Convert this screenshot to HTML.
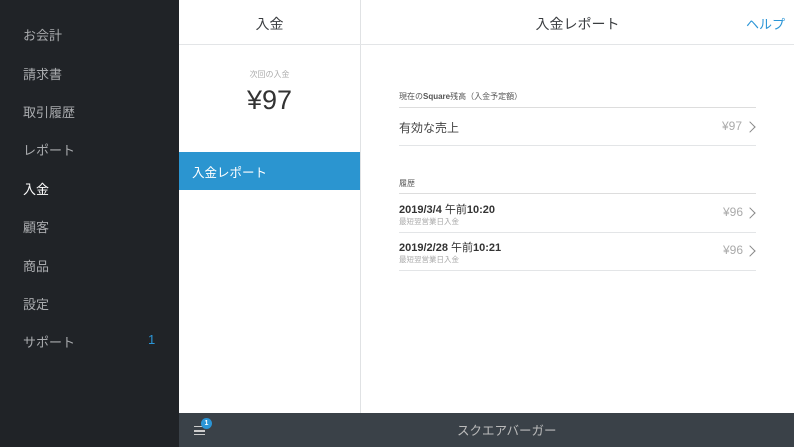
<!DOCTYPE html><html><head><meta charset="utf-8"><style>
*{margin:0;padding:0;box-sizing:border-box}
body{width:794px;height:447px;overflow:hidden;position:relative;font-family:"Liberation Sans","Noto Sans CJK JP",sans-serif;background:#fff}
.side{position:absolute;left:0;top:0;width:179px;height:447px;background:#202327}
.side div{position:absolute;left:23px;font-size:13px;color:#a9abae}
.a{position:absolute}
.hl{position:absolute;height:1px;background:#e3e5e7}
.chev{position:absolute;width:8px;height:8px;border-right:1.5px solid #888;border-top:1.5px solid #888;transform:rotate(45deg)}
</style></head><body>
<div class="side">
<div style="top:25px">お会計</div>
<div style="top:64px">請求書</div>
<div style="top:102px">取引履歴</div>
<div style="top:140px">レポート</div>
<div style="top:179px;color:#fff">入金</div>
<div style="top:217px">顧客</div>
<div style="top:256px">商品</div>
<div style="top:294px">設定</div>
<div style="top:332px">サポート</div>
<div style="top:332px;left:148px;color:#2b95d6">1</div>
</div>
<div class="a" style="left:360px;top:0;width:1px;height:413px;background:#e0e2e4"></div>
<div class="hl" style="left:179px;top:44px;width:615px"></div>
<div class="a" style="left:179px;top:14px;width:181px;text-align:center;font-size:14px;color:#3a3d40">入金</div>
<div class="a" style="left:179px;top:69px;width:181px;text-align:center;font-size:8px;color:#aaa">次回の入金</div>
<div class="a" style="left:179px;top:85px;width:181px;text-align:center;font-size:27px;color:#333">¥97</div>
<div class="a" style="left:179px;top:152px;width:181px;height:38px;background:#2b95d0;color:#fff;font-size:12.5px;padding:10px 13px">入金レポート</div>
<div class="a" style="left:361px;top:14px;width:433px;text-align:center;font-size:14px;color:#3a3d40">入金レポート</div>
<div class="a" style="left:746px;top:14px;font-size:13px;color:#2b95d6">ヘルプ</div>
<div class="a" style="left:399px;top:91px;font-size:8px;color:#555">現在の<b>Square</b>残高（入金予定額）</div>
<div class="hl" style="left:399px;top:107px;width:357px;background:#ddd"></div>
<div class="a" style="left:399px;top:119px;font-size:12px;color:#444">有効な売上</div>
<div class="a" style="left:722px;top:119px;font-size:12px;color:#aaa">¥97</div>
<div class="chev" style="left:746px;top:123px"></div>
<div class="hl" style="left:399px;top:145px;width:357px"></div>
<div class="a" style="left:399px;top:178px;font-size:8px;color:#555">履歴</div>
<div class="hl" style="left:399px;top:193px;width:357px;background:#ddd"></div>
<div class="a" style="left:399px;top:201px;font-size:11px;color:#333;font-weight:bold">2019/3/4 <span style="font-weight:normal">午前</span>10:20</div>
<div class="a" style="left:399px;top:216px;font-size:7.5px;color:#aaa">最短翌営業日入金</div>
<div class="a" style="left:723px;top:205px;font-size:12px;color:#aaa">¥96</div>
<div class="chev" style="left:746px;top:209px"></div>
<div class="hl" style="left:399px;top:232px;width:357px"></div>
<div class="a" style="left:399px;top:239px;font-size:11px;color:#333;font-weight:bold">2019/2/28 <span style="font-weight:normal">午前</span>10:21</div>
<div class="a" style="left:399px;top:254px;font-size:7.5px;color:#aaa">最短翌営業日入金</div>
<div class="a" style="left:723px;top:243px;font-size:12px;color:#aaa">¥96</div>
<div class="chev" style="left:746px;top:247px"></div>
<div class="hl" style="left:399px;top:270px;width:357px"></div>
<div class="a" style="left:179px;top:413px;width:615px;height:34px;background:#3a4148"></div>
<div class="a" style="left:194px;top:426px;width:11px;height:9px;border-top:1.5px solid #ccc;border-bottom:1.5px solid #ccc"></div>
<div class="a" style="left:194px;top:430px;width:11px;height:1.5px;background:#ccc"></div>
<div class="a" style="left:201px;top:418px;width:11px;height:11px;border-radius:50%;background:#2b95d6;color:#fff;font-size:7px;text-align:center;line-height:11px;font-weight:bold">1</div>
<div class="a" style="left:457px;top:420px;font-size:12.5px;color:#bbb">スクエアバーガー</div>
</body></html>
